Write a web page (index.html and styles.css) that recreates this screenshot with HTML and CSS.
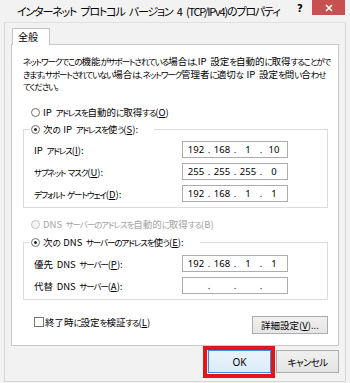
FILE: index.html
```html
<!DOCTYPE html>
<html lang="ja">
<head>
<meta charset="utf-8">
<link rel="stylesheet" href="styles.css">
</head>
<body>
<div class="window">
  <div class="titlebar">
    <div class="title">インターネット プロトコル バージョン 4 (TCP/IPv4)のプロパティ</div>
    <div class="help">?</div>
    <div class="close"><svg width="8" height="8" viewBox="0 0 8 8"><path d="M1 1L7 7M7 1L1 7" stroke="#fff" stroke-width="1.6"/></svg></div>
  </div>
  <div class="frame">
    <div class="tabs"><div class="tab">全般</div></div>
    <div class="panel">
      <p class="desc"><span class="k">ネットワークでこの</span>機能<span class="k">がサポートされている</span>場合<span class="k">は、</span>IP 設定<span class="k">を</span>自動的<span class="k">に</span>取得<span class="k">することがで</span><br><span class="k">きます。サポートされていない</span>場合<span class="k">は、ネットワーク</span>管理者<span class="k">に</span>適切<span class="k">な</span> IP 設定<span class="k">を</span>問<span class="k">い</span>合<span class="k">わせ</span><br><span class="k">てください。</span></p>
      <div class="opt first"><span class="radio"></span><span>IP <span class="k">アドレスを</span>自動的<span class="k">に</span>取得<span class="k">する</span>(<u>O</u>)</span></div>
      <fieldset class="group">
        <legend class="opt"><span class="radio on"></span><span>次<span class="k">の</span> IP <span class="k">アドレスを</span>使<span class="k">う</span>(<u>S</u>):</span></legend>
        <div class="row"><span class="lbl">IP <span class="k">アドレス</span>(<u>I</u>):</span><div class="ip"><span>192</span><i>.</i><span>168</span><i>.</i><span>1</span><i>.</i><span>10</span></div></div>
        <div class="row"><span class="lbl"><span class="k">サブネット マスク</span>(<u>U</u>):</span><div class="ip"><span>255</span><i>.</i><span>255</span><i>.</i><span>255</span><i>.</i><span>0</span></div></div>
        <div class="row"><span class="lbl"><span class="k">デフォルト ゲートウェイ</span>(<u>D</u>):</span><div class="ip"><span>192</span><i>.</i><span>168</span><i>.</i><span>1</span><i>.</i><span>1</span></div></div>
      </fieldset>
      <div class="opt disabled"><span class="radio"></span><span>DNS <span class="k">サーバーのアドレスを</span>自動的<span class="k">に</span>取得<span class="k">する</span>(B)</span></div>
      <fieldset class="group g2">
        <legend class="opt"><span class="radio on"></span><span>次<span class="k">の</span> DNS <span class="k">サーバーのアドレスを</span>使<span class="k">う</span>(<u>E</u>):</span></legend>
        <div class="row"><span class="lbl">優先 DNS <span class="k">サーバー</span>(<u>P</u>):</span><div class="ip"><span>192</span><i>.</i><span>168</span><i>.</i><span>1</span><i>.</i><span>1</span></div></div>
        <div class="row"><span class="lbl">代替 DNS <span class="k">サーバー</span>(<u>A</u>):</span><div class="ip"><span></span><i>.</i><span></span><i>.</i><span></span><i>.</i><span></span></div></div>
      </fieldset>
      <div class="bottom">
        <div class="check"><span class="box"></span><span>終了時<span class="k">に</span>設定<span class="k">を</span>検証<span class="k">する</span>(<u>L</u>)</span></div>
        <div class="btn adv">詳細設定(<u>V</u>)...</div>
      </div>
    </div>
    <div class="footer">
      <div class="mark"><div class="btn ok">OK</div></div>
      <div class="btn cancel"><span class="k">キャンセル</span></div>
    </div>
  </div>
</div>
</body>
</html>
```
FILE: styles.css
```css
* { box-sizing: border-box; }
html, body { margin: 0; padding: 0; }
body {
  width: 350px;
  height: 383px;
  overflow: hidden;
  background: #f3f2f2;
  font-family: "Noto Sans CJK JP", "Noto Sans", sans-serif;
  font-feature-settings: "palt";
  font-size: 9.5px;
  word-spacing: 1.5px;
  color: #000;
}
u { text-decoration: underline; text-underline-offset: 1px; }
.k {
  font-size: 8.5px;
  letter-spacing: -1.1px;
}
.window { width: 350px; height: 383px; }
.titlebar {
  height: 22px;
  display: flex;
  align-items: flex-start;
}
.title {
  padding-left: 17px;
  padding-top: 4px;
  font-size: 11px;
  letter-spacing: -1.2px;
  word-spacing: 3px;
  line-height: 15px;
  white-space: nowrap;
  flex: 1;
}
.help {
  font-family: "DejaVu Sans", sans-serif;
  font-weight: bold;
  font-size: 10px;
  line-height: 12px;
  padding-top: 3px;
  width: 15px;
}
.close {
  width: 33px;
  height: 15px;
  margin-right: 5px;
  background: #c75050;
  display: flex;
  align-items: center;
  justify-content: center;
}
.close svg { display: block; }
.frame {
  margin: 0 4px;
  height: 360px;
  border: 1px solid #d6d6d6;
  border-top-color: #e0e0e0;
  padding-top: 5px;
}
.tabs { display: flex; padding-left: 7px; }
.tab {
  width: 38px;
  height: 17px;
  background: #fff;
  border: 1px solid #c4c4c4;
  border-bottom: none;
  padding-left: 5px;
  font-size: 10px;
  line-height: 15px;
  margin-bottom: -1px;
  position: relative;
  z-index: 1;
}
.panel {
  margin: 0 6px;
  background: #fff;
  border: 1px solid #c8c8c8;
  padding: 10px 10px 11px 11px;
}
.desc {
  margin: 0;
  line-height: 12.5px;
  white-space: nowrap;
}
.opt {
  display: flex;
  align-items: center;
  height: 16px;
  white-space: nowrap;
}
.opt.first { margin-top: 11.5px; margin-left: 8px; }
.radio {
  width: 9px;
  height: 9px;
  border: 1px solid #6f6f6f;
  border-radius: 50%;
  background: #fff;
  margin-right: 3px;
  display: flex;
  align-items: center;
  justify-content: center;
  flex: none;
}
.radio.on::after {
  content: "";
  width: 3px;
  height: 3px;
  border-radius: 50%;
  background: #222;
}
.disabled { color: #a3a3a3; margin-top: 8px; margin-left: 8px; }
.disabled .radio { border-color: #c2c2c2; background: #f4f4f4; }
.group {
  margin: 1px 0 0 0;
  border: 1px solid #dcdcdc;
  padding: 4px 0 5px 6px;
  min-width: 0;
}
.group.g2 { margin-top: 2px; padding-top: 5px; }
.group legend {
  padding: 0 16px 0 1px;
}
.row {
  display: flex;
  align-items: center;
  height: 17px;
}
.row + .row { margin-top: 5px; }
.lbl {
  width: 152px;
  padding-left: 4px;
  white-space: nowrap;
}
.ip {
  width: 106px;
  height: 17px;
  border: 1px solid #adadad;
  background: #fff;
  display: flex;
  align-items: center;
  padding-left: 2px;
  font-family: "Noto Sans", sans-serif;
  font-size: 9.5px;
  word-spacing: 0;
  line-height: 15px;
}
.ip span { width: 22px; text-align: center; }
.ip i { font-style: normal; width: 4px; text-align: center; }
.bottom {
  margin-top: 16px;
  display: flex;
  justify-content: space-between;
  align-items: flex-start;
}
.check {
  display: flex;
  align-items: center;
  height: 11px;
  margin-left: 11px;
  white-space: nowrap;
}
.box {
  width: 10px;
  height: 10px;
  border: 1px solid #757575;
  background: #fff;
  margin-right: 1px;
  flex: none;
}
.btn {
  display: flex;
  align-items: center;
  justify-content: center;
  border: 1px solid #acacac;
  background: linear-gradient(#f0f0f0, #e5e5e5);
  white-space: nowrap;
}
.adv { width: 76px; height: 18px; }
.footer {
  display: flex;
  justify-content: flex-end;
  align-items: flex-start;
  padding-right: 6px;
  gap: 1px;
}
.mark {
  width: 72px;
  height: 32px;
  border: 4px solid #e3141c;
  padding: 0 0 0 1px;
}
.ok {
  width: 63px;
  height: 23px;
  border-color: #3c8ee0;
  background: linear-gradient(#eaf3fb, #dcecfc);
  font-family: "Noto Sans", sans-serif;
  font-size: 10px;
}
.cancel { width: 63px; height: 23px; margin-top: 4px; }
.cancel .k { font-size: 9.5px; letter-spacing: -0.6px; }
```
